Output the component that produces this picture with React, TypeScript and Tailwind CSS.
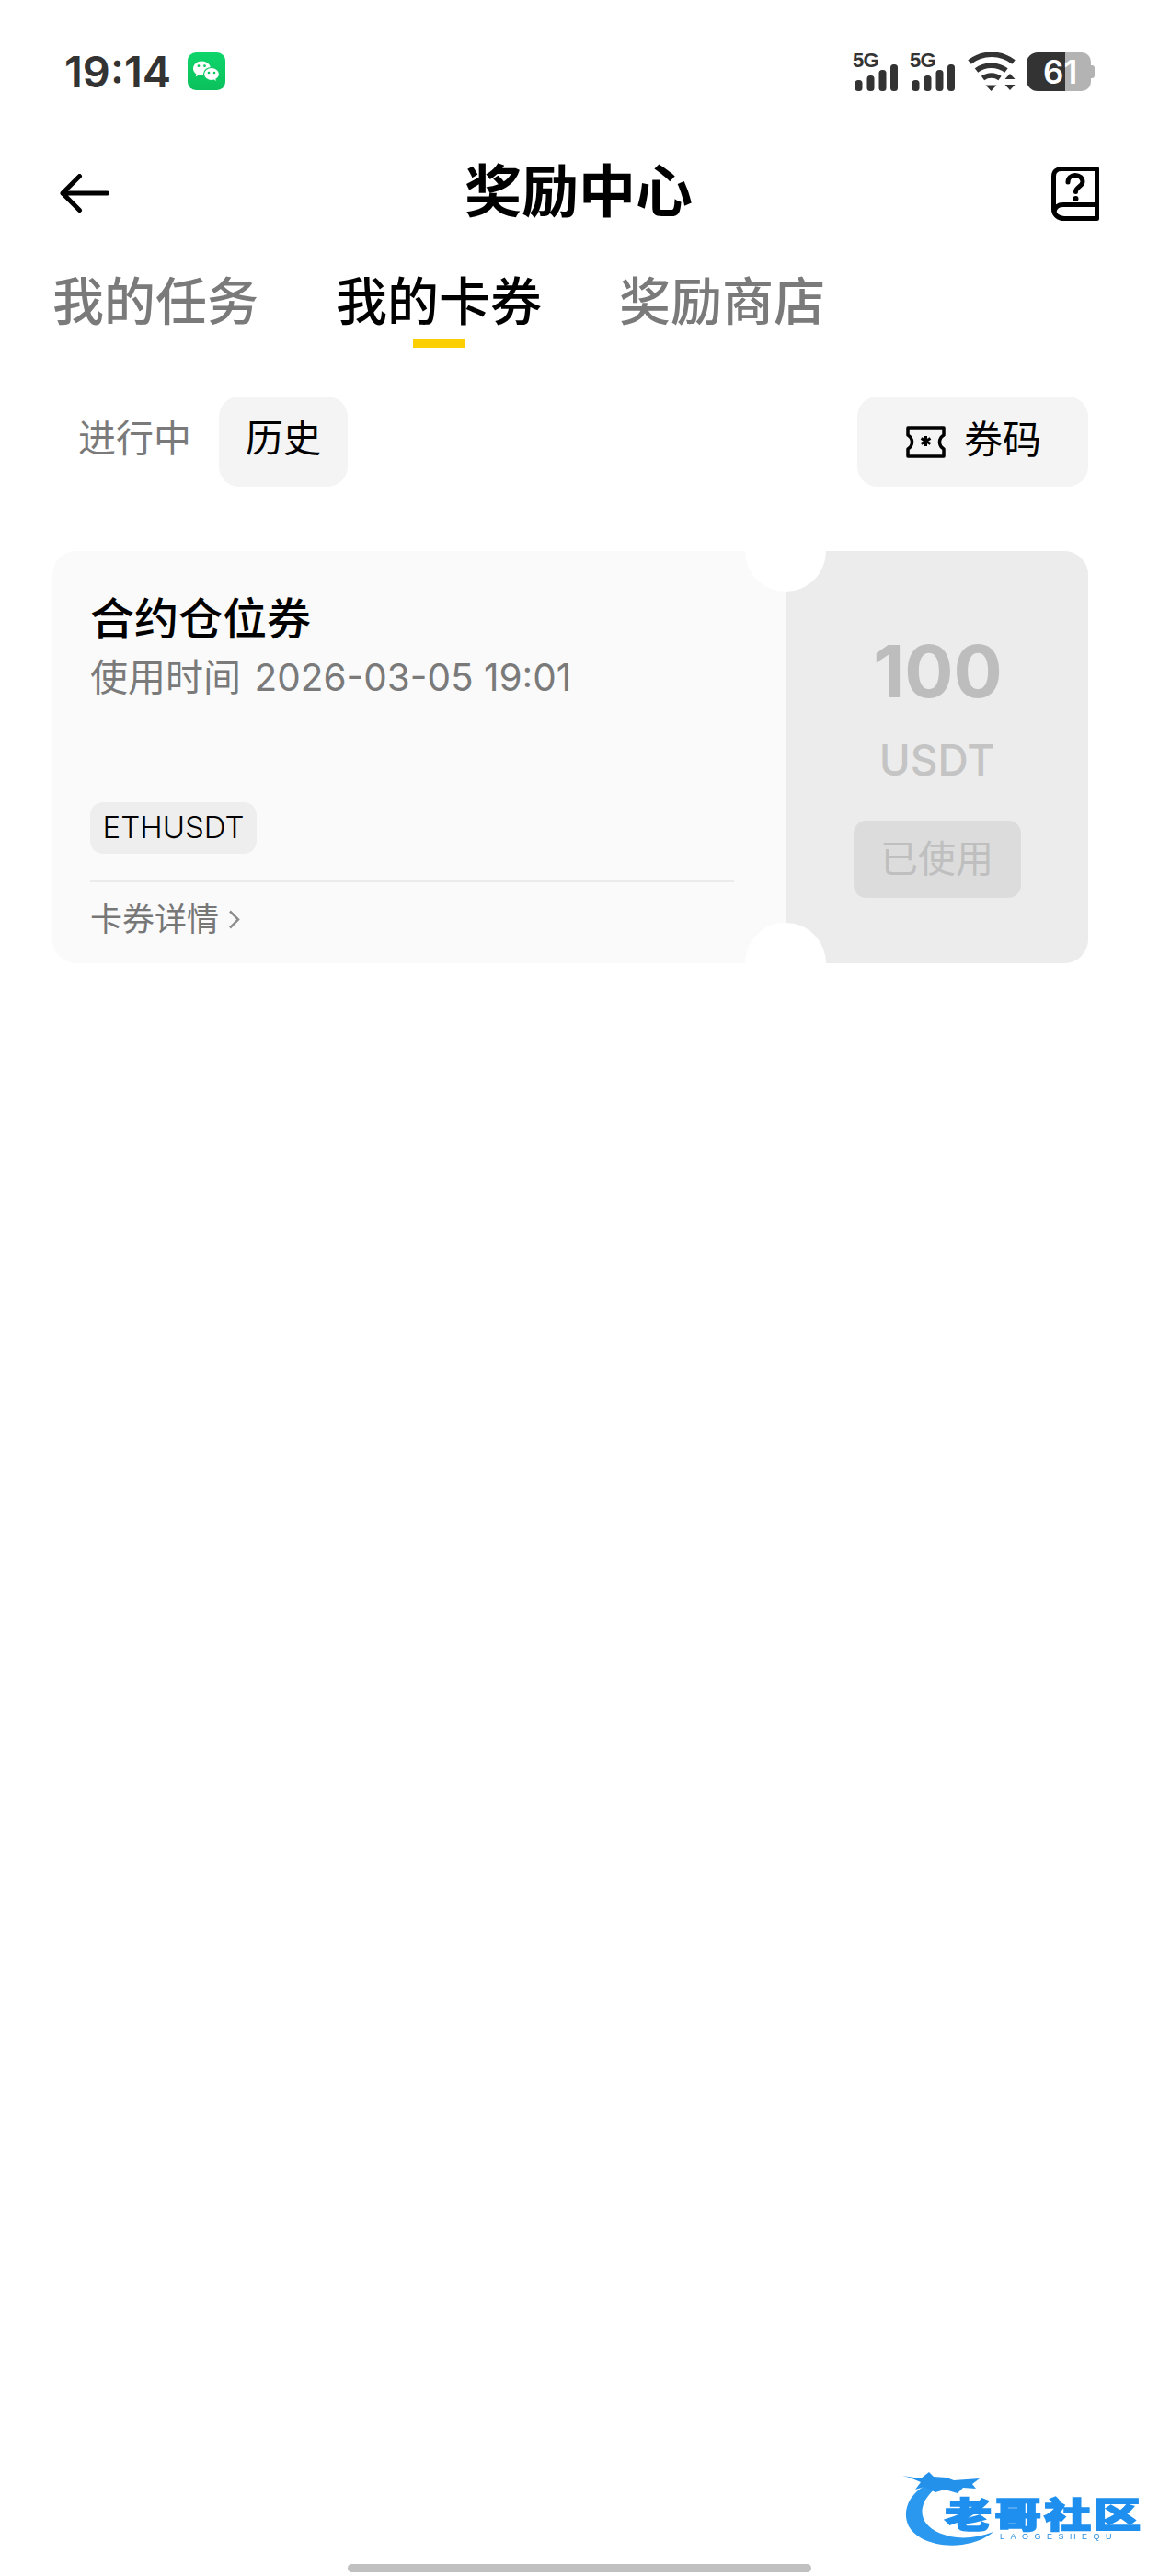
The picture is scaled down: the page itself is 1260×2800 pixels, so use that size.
const CJK = "font-['Inter','Noto_Sans_CJK_SC',sans-serif]";

const WeChatIcon = () => (
  <svg width="41" height="41" viewBox="0 0 41 41">
    <defs>
      <linearGradient id="wx" x1="0" y1="0" x2="0" y2="1">
        <stop offset="0" stopColor="#0fd56b" />
        <stop offset="1" stopColor="#0bc15c" />
      </linearGradient>
    </defs>
    <rect width="41" height="41" rx="9" fill="url(#wx)" />
    <path d="M15.500 9.500C10.500 9.500 6 13 6 17.500c0 2.500 1.300 4.500 3.400 5.900l-.6 3 3.200-1.800c1 .3 2.300.5 3.500.5 5.300 0 9.500-3.300 9.500-7.600s-4.200-8-9.500-8z" fill="#fff" />
    <path d="M26 16.500c-4.700 0-8.500 3.100-8.500 7s3.800 7 8.500 7c.9 0 1.800-.1 2.600-.4l3 2.300-.6-3.300c2.100-1.300 3.500-3.300 3.500-5.600 0-3.900-3.800-7-8.500-7z" fill="#fff" stroke="#0cc860" strokeWidth="1.200" />
    <circle cx="12" cy="14.700" r="1.400" fill="#0cc860" />
    <circle cx="18.500" cy="14.700" r="1.400" fill="#0cc860" />
    <circle cx="23" cy="22" r="1.300" fill="#0cc860" />
    <circle cx="29" cy="22" r="1.300" fill="#0cc860" />
  </svg>
);

const SignalIcon = () => (
  <div className="flex h-[42px] w-[50px] flex-col">
    <span className="h-[17px] font-['Liberation_Sans',sans-serif] text-[22px] leading-[17px] font-bold tracking-[-0.800px] text-[#333333]">
      5G
    </span>
    <svg className="-mt-[4px]" width="50" height="29" viewBox="0 0 50 29">
      <rect x="2.500" y="17" width="8" height="12" rx="3.500" fill="#333" />
      <rect x="15.500" y="12" width="8" height="17" rx="3.500" fill="#333" />
      <rect x="28.500" y="6" width="8" height="23" rx="3.500" fill="#333" />
      <rect x="41" y="0" width="8" height="29" rx="3.500" fill="#333" />
    </svg>
  </div>
);

const WifiIcon = () => (
  <svg width="52" height="42" viewBox="0 0 52 42" fill="none" stroke="#333" strokeWidth="5.500">
    <path d="M2 10.500C16 -0.500 36 -0.500 50 10.500" />
    <path d="M9.500 19.500C18.500 12.500 32.500 12.500 42 19.500" />
    <path d="M16.500 28C22 24 29.500 24 35 28" />
    <path d="M19.500 35.500h12l-6 6.500z" fill="#333" stroke="none" />
    <path d="M40.500 26l5.500-6 5.500 6zM40.500 32h11l-5.500 6z" fill="#333" stroke="none" transform="translate(0 3)" />
  </svg>
);

const Battery = () => (
  <div className="relative ml-[12px] flex h-[42px] w-[74px] overflow-hidden">
    <div className="h-full w-[42px] rounded-l-[12px] bg-[#333333]" />
    <div className="h-full w-[28px] rounded-r-[10px] bg-[#b3b3b3]" />
    <div className="mt-[14px] h-[14px] w-[4px] rounded-r-[3px] bg-[#b3b3b3]" />
    <span className="absolute left-[18px] top-[0px] font-['Inter',sans-serif] text-[35px] leading-[42px] font-semibold text-white">
      61
    </span>
  </div>
);

const BookIcon = () => (
  <svg width="52" height="59" viewBox="0 0 52 59" fill="none" stroke="#000" strokeWidth="5" strokeLinejoin="round">
    <path d="M11 2.500h38.500v54H14c-6.500 0-11.500-4-11.500-10V10.500c0-5 3.500-8 8.500-8z" />
    <path d="M3 49c1-5 5-7.500 10-7.500h36.500" />
    <path d="M18 17c0-4.500 3.500-7.500 8-7.500s8 3 8 7c0 5-7.500 5.500-7.500 11" strokeLinecap="round" />
    <circle cx="26.500" cy="35" r="3" fill="#000" stroke="none" />
  </svg>
);

const TicketIcon = () => (
  <svg width="43" height="35" viewBox="0 0 43 35" fill="none" stroke="#000" strokeWidth="3.500" strokeLinejoin="round">
    <path d="M2 2h39v8c-3.500 2-4.500 4.500-4.500 7.500s1 5.500 4.500 7.500v8H2v-8c3.500-2 4.500-4.500 4.500-7.500S5.500 12 2 10z" />
    <path d="M21.500 11v11M16.500 13.500l10 6M26.500 13.500l-10 6" strokeWidth="3" />
  </svg>
);

const Watermark = () => (
  <div className="absolute right-[22px] top-[2680px] h-[90px] w-[258px] blur-[0.7px]">
    <svg className="absolute left-0 top-0" width="110" height="90" viewBox="0 0 110 90">
      <path d="M25 22C8 32 0 50 8 66c9 16 34 23 58 20 14-2 26-7 34-14-16 6-32 8-47 5C30 72 18 58 24 42c3-8 9-14 16-20z" fill="#2a98ee" />
      <path d="M1 11l20 3 9-7 5 5 14 1 8 3 14-1 14-1-8 6 4 5-14-1-6 6-14-4-10 3-12-6-10 3 6-8-12-5z" fill="#2390ea" />
    </svg>
    <div className="absolute left-[47px] top-[32px] origin-left scale-x-[1.35] font-['Noto_Sans_CJK_SC',sans-serif] text-[38px] leading-[38px] font-black tracking-[2px] whitespace-nowrap text-[#1e8fee] [-webkit-text-stroke:1.500px_#1e8fee]">
      老哥社区
    </div>
    <div className="absolute left-[107px] top-[72px] font-['Liberation_Sans',sans-serif] text-[9px] leading-[10px] tracking-[6.500px] whitespace-nowrap text-[#2a8fe0]">
      LAOGESHEQU
    </div>
  </div>
);

export default function App() {
  return (
    <div className={`relative h-[2800px] w-[1260px] overflow-hidden bg-white ${CJK}`}>
      {/* status bar */}
      <div className="flex h-[155px] items-start justify-between pl-[70px] pr-[70px] pt-[57px]">
        <div className="flex items-center gap-[18px]">
          <span className="font-['Inter',sans-serif] text-[47px] leading-[41px] font-semibold text-[#333333]">19:14</span>
          <WeChatIcon />
        </div>
        <div className="flex items-start">
          <SignalIcon />
          <div className="ml-[12px]">
            <SignalIcon />
          </div>
          <div className="ml-[13px]">
            <WifiIcon />
          </div>
          <Battery />
        </div>
      </div>

      {/* nav */}
      <div className="flex h-[110px] items-center justify-between pl-[65px] pr-[65px]">
        <svg width="54" height="42" viewBox="0 0 54 42" fill="none" stroke="#000" strokeWidth="5" strokeLinecap="round" strokeLinejoin="round">
          <path d="M51.500 21H3M21.500 2.500L3 21l18.500 18.500" />
        </svg>
        <h1 className="mr-[4px] pb-[3px] text-[62px] leading-[80px] font-bold text-black">奖励中心</h1>
        <BookIcon />
      </div>

      {/* tabs */}
      <div className="flex h-[113px] items-start gap-[84px] pl-[57px] pt-[31px]">
        <span className="text-[56px] leading-[64px] font-medium text-[#7a7a7a]">我的任务</span>
        <div className="flex flex-col items-center">
          <span className="text-[56px] leading-[64px] font-medium text-black">我的卡券</span>
          <div className="mt-[8px] h-[10px] w-[56px] bg-[#fcd000]" />
        </div>
        <span className="text-[56px] leading-[64px] font-medium text-[#7a7a7a]">奖励商店</span>
      </div>

      {/* filter row */}
      <div className="mt-[53px] flex h-[98px] items-center justify-between pl-[85px] pr-[77px]">
        <div className="flex items-center gap-[30px]">
          <span className="pb-[6px] text-[41px] text-[#7a7a7a]">进行中</span>
          <button className="flex h-[98px] w-[140px] items-center justify-center rounded-[22px] bg-[#f4f4f4] pb-[6px] text-[41px] text-black">
            历史
          </button>
        </div>
        <button className="flex h-[98px] w-[251px] items-center justify-center gap-[20px] rounded-[22px] bg-[#f4f4f4] pl-[2px] text-[42px] text-black">
          <TicketIcon />
          <span className="pb-[6px]">券码</span>
        </button>
      </div>

      {/* coupon card */}
      <div className="relative mx-[57px] mt-[70px] flex h-[448px] w-[1126px] overflow-hidden rounded-[26px] bg-[#fafafa]">
        <div className="flex w-[797px] flex-col pl-[41px] pr-[56px] pt-[44px]">
          <div className="text-[48px] leading-[60px] font-medium text-black">合约仓位券</div>
          <div className="mt-[5px] text-[41px] leading-[56px] text-[#7a7a7a]">
            使用时间 <span className="ml-[3px] font-['Inter',sans-serif] text-[40.500px]">2026-03-05 19:01</span>
          </div>
          <div className="mt-[107px] flex h-[56px] w-[181px] items-center justify-center rounded-[14px] bg-[#eeeeee] font-['Inter',sans-serif] text-[33px] font-light text-black">
            ETHUSDT
          </div>
          <div className="mt-[28px] h-[3px] w-full bg-[#ebebeb]" />
          <div className="mt-[16px] flex items-center gap-[10px] text-[35px] leading-[48px] text-[#777777]">
            卡券详情
            <svg width="13" height="21" viewBox="0 0 13 21" fill="none" stroke="#8c8c8c" strokeWidth="2.500">
              <path d="M2 1.500l9 9-9 9" />
            </svg>
          </div>
        </div>
        <div className="flex flex-1 flex-col items-center bg-[#ececec] pt-[85px]">
          <div className="pl-[2px] font-['Inter',sans-serif] text-[79px] leading-[90px] font-bold text-[#bdbdbd]">100</div>
          <div className="mt-[26px] font-['Inter',sans-serif] text-[46px] leading-[52px] font-medium text-[#c4c4c4]">USDT</div>
          <div className="mt-[40px] flex h-[84px] w-[182px] items-center justify-center rounded-[14px] bg-[#dcdcdc] text-[41px] text-[#bfbfbf]">
            已使用
          </div>
        </div>
        <div className="absolute left-[753px] top-[-44px] h-[88px] w-[88px] rounded-full bg-white" />
        <div className="absolute bottom-[-44px] left-[753px] h-[88px] w-[88px] rounded-full bg-white" />
      </div>

      <Watermark />
      <div className="absolute bottom-[4px] left-[378px] h-[9px] w-[504px] rounded-full bg-[#c0c0c0]" />
    </div>
  );
}
